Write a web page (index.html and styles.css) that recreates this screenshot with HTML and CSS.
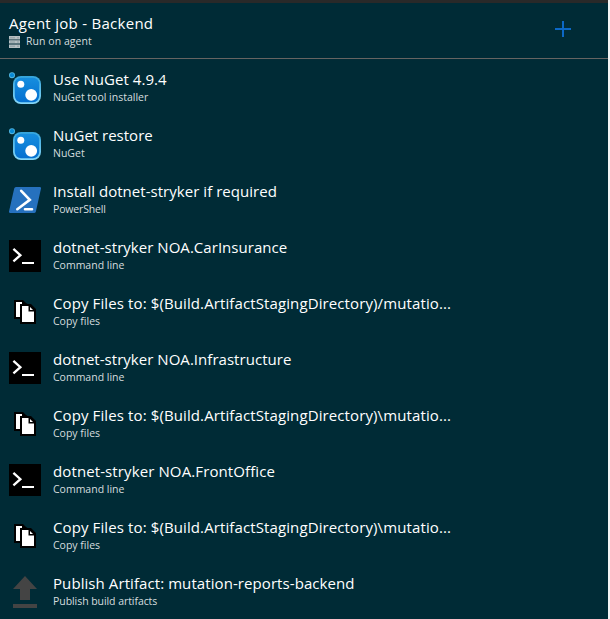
FILE: index.html
```html
<!DOCTYPE html>
<html lang="en">
<head>
<meta charset="utf-8">
<title>Agent job - Backend</title>
<link rel="stylesheet" href="styles.css">
</head>
<body>
<svg width="0" height="0" class="defs" aria-hidden="true">
  <defs>
    <linearGradient id="rim" x1="0" y1="0" x2="0" y2="1"><stop offset="0" stop-color="#35a5dc"/><stop offset="1" stop-color="#86d7f8"/></linearGradient>
    <linearGradient id="face" x1="0" y1="0" x2="0" y2="1"><stop offset="0" stop-color="#168ede"/><stop offset="1" stop-color="#0570d0"/></linearGradient>
    <symbol id="nuget" viewBox="0 0 32 32">
      <circle cx="3" cy="3.2" r="3" fill="#55b9e4"/><circle cx="3" cy="3.2" r="2.1" fill="#0989d4"/>
      <rect x="4" y="4" width="28" height="28" rx="8" fill="url(#rim)"/>
      <rect x="5.8" y="5.8" width="24.4" height="24.4" rx="6.2" fill="url(#face)"/>
      <circle cx="11.8" cy="12.2" r="3.5" fill="#fff"/><circle cx="22.2" cy="22.8" r="5.9" fill="#fff"/>
    </symbol>
    <symbol id="powershell" viewBox="0 0 32 32">
      <path d="M7 3H30.8Q32.3 3 32 4.5L26.9 27.4Q26.5 29 25 29H1.3Q-.3 29 0 27.5L5.2 4.6Q5.5 3 7 3Z" fill="#2671be"/>
      <path d="M12.2 6.8 20.8 15.9 8.3 25.2M16 25.3H23" fill="none" stroke="#fff" stroke-width="2.6" stroke-linecap="round"/>
    </symbol>
    <symbol id="cmd" viewBox="0 0 32 32">
      <path d="M0 0H32V32H0Z"/><path d="M4.4 8.8 11.4 15.2 4.4 21.4" fill="none" stroke="#fff" stroke-width="2.3"/><path d="M13 22H25V24H13Z" fill="#fff"/>
    </symbol>
    <symbol id="copy" viewBox="0 0 32 32">
      <path d="M5 4H14L17 7L18.5 8H22L27 13V28H11V23H5Z"/>
      <path d="M7 6H13V8H11V21H7Z" fill="#fff"/>
      <path d="M13 10H19.5V15.5H25V26H13Z" fill="#fff"/><path d="M21 11 24 14H21Z" fill="#fff"/>
    </symbol>
    <symbol id="publish" viewBox="0 0 32 32"><path d="M16 0 28 13H21V24H11V13H4ZM4 28H28V32H4Z" fill="#444"/></symbol>
  </defs>
</svg>
<main class="panel">
  <header class="job">
    <div class="job-text">
      <h1 class="title t-job">Agent job - Backend</h1>
      <div class="sub agent"><svg class="server" viewBox="0 0 11 12"><path d="M0 0H11V3.5H0ZM0 4.3H11V7.6H0ZM0 8.4H11V12H0Z" fill="#b6c0c3"/><path d="M1 1.8H6M1 6H6M1 10.2H6M8 1.8H10M8 6H10M8 10.2H10" stroke="#7c8f95" stroke-width=".7"/></svg><span>Run on agent</span></div>
    </div>
    <svg class="add" viewBox="0 0 16 16"><path d="M0 7H16V9H0ZM7 0H9V16H7Z" fill="#0c68c6"/></svg>
  </header>
  <ul class="tasks">
    <li class="task"><svg class="icon"><use href="#nuget"/></svg><div><h2 class="title t-snug">Use NuGet 4.9.4</h2><p class="sub">NuGet tool installer</p></div></li>
    <li class="task"><svg class="icon"><use href="#nuget"/></svg><div><h2 class="title">NuGet restore</h2><p class="sub">NuGet</p></div></li>
    <li class="task"><svg class="icon"><use href="#powershell"/></svg><div><h2 class="title t-snug">Install dotnet-stryker if required</h2><p class="sub s-tight">PowerShell</p></div></li>
    <li class="task"><svg class="icon"><use href="#cmd"/></svg><div><h2 class="title t-snug">dotnet-stryker NOA.CarInsurance</h2><p class="sub">Command line</p></div></li>
    <li class="task"><svg class="icon"><use href="#copy"/></svg><div><h2 class="title t-wide">Copy Files to: $(Build.ArtifactStagingDirectory)/mutatio...</h2><p class="sub">Copy files</p></div></li>
    <li class="task"><svg class="icon"><use href="#cmd"/></svg><div><h2 class="title t-snug">dotnet-stryker NOA.Infrastructure</h2><p class="sub">Command line</p></div></li>
    <li class="task"><svg class="icon"><use href="#copy"/></svg><div><h2 class="title t-wide">Copy Files to: $(Build.ArtifactStagingDirectory)\mutatio...</h2><p class="sub">Copy files</p></div></li>
    <li class="task"><svg class="icon"><use href="#cmd"/></svg><div><h2 class="title t-wide">dotnet-stryker NOA.FrontOffice</h2><p class="sub">Command line</p></div></li>
    <li class="task"><svg class="icon"><use href="#copy"/></svg><div><h2 class="title t-wide">Copy Files to: $(Build.ArtifactStagingDirectory)\mutatio...</h2><p class="sub">Copy files</p></div></li>
    <li class="task"><svg class="icon"><use href="#publish"/></svg><div><h2 class="title t-mid">Publish Artifact: mutation-reports-backend</h2><p class="sub s-narrow">Publish build artifacts</p></div></li>
  </ul>
</main>
</body>
</html>
```
FILE: styles.css
```css
* { box-sizing: border-box; }
body { margin: 0; background: #f4f5f5; font-family: "Open Sans", "Noto Sans", sans-serif; overflow: hidden; }
.defs { position: absolute; }
.panel { width: 608px; height: 619px; overflow: hidden; background: #002b36; border-top: 3px solid #292929; }
.job { height: 56px; padding: 10px 37px 0 9px; display: flex; justify-content: space-between; border-bottom: 1px solid #666462; }
.add { width: 16px; height: 16px; margin-top: 8px; shape-rendering: crispEdges; }
.title { margin: 0; font-size: 15px; line-height: 21px; font-weight: 400; color: #fff; white-space: nowrap; }
.t-job { letter-spacing: .28px; }
.t-snug { letter-spacing: .035px; }
.t-mid { letter-spacing: .08px; }
.t-wide { letter-spacing: .11px; }
.sub { margin: 0; font-size: 10.5px; line-height: 15px; color: #d6dddf; white-space: nowrap; }
.s-tight { letter-spacing: -.15px; }
.s-narrow { letter-spacing: -.06px; }
.agent { display: flex; align-items: center; gap: 6px; letter-spacing: .05px; }
.server { width: 11px; height: 12px; }
.tasks { list-style: none; margin: 0; padding: 0; }
.task { height: 56px; padding: 10px 0 0 9px; display: flex; gap: 12px; }
.icon { width: 32px; height: 32px; margin-top: 3px; flex: none; }
```
